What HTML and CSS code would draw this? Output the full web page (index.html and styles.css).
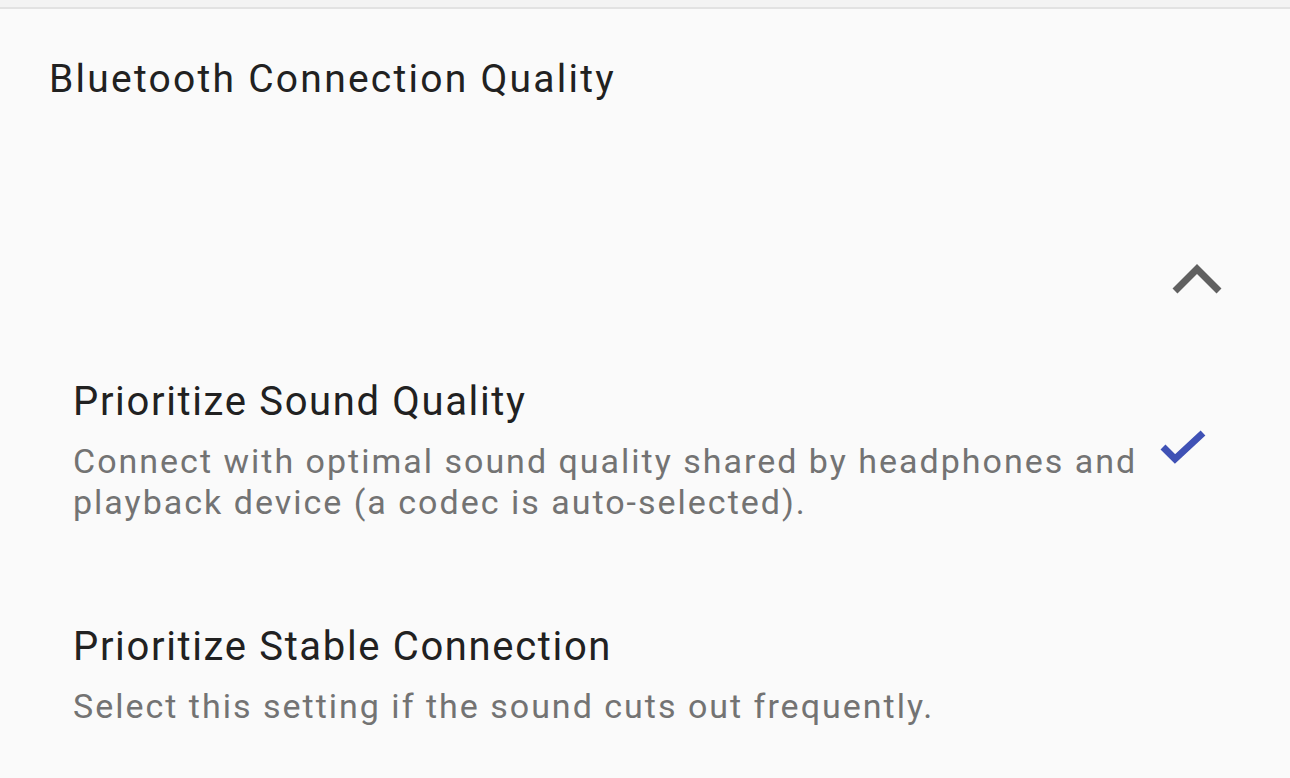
FILE: index.html
```html
<!DOCTYPE html>
<html lang="en">
<head>
  <meta charset="UTF-8">
  <title>Bluetooth Connection Quality</title>
  <link rel="stylesheet" href="styles.css">
</head>
<body>
  <div class="topbar"></div>
  <div class="panel">
    <h1 class="panel-title">Bluetooth Connection Quality</h1>
    <div class="collapse-row">
      <svg class="chevron" width="52" height="32" viewBox="0 0 52 32">
        <path d="M4 28 L26 6 L48 28" fill="none" stroke="#606060" stroke-width="7"/>
      </svg>
    </div>
    <div class="option-list">
      <div class="option selected">
        <div class="option-text">
          <div class="option-title">Prioritize Sound Quality</div>
          <div class="option-desc">Connect with optimal sound quality shared by headphones and playback device (a codec is auto-selected).</div>
        </div>
        <svg class="check" width="46" height="36" viewBox="0 0 46 36">
          <path d="M3 17 L15 29 L43 3" fill="none" stroke="#3f51b5" stroke-width="7"/>
        </svg>
      </div>
      <div class="option">
        <div class="option-text">
          <div class="option-title">Prioritize Stable Connection</div>
          <div class="option-desc">Select this setting if the sound cuts out frequently.</div>
        </div>
      </div>
    </div>
  </div>
</body>
</html>
```

FILE: styles.css
```css
body {
  margin: 0;
  background: #fafafa;
  font-family: Roboto, "Noto Sans", sans-serif;
  color: #212121;
  overflow: hidden;
}
.topbar {
  height: 7px;
  background: #f3f3f3;
  border-bottom: 2px solid #e2e2e2;
}
.panel {
  padding: 0 0 0 49px;
}
.panel-title {
  margin: 0;
  padding-top: 47px;
  font-size: 39px;
  font-weight: 400;
  line-height: 46px;
  letter-spacing: 2.25px;
}
.collapse-row {
  display: flex;
  justify-content: flex-end;
  padding: 161px 67px 0 0;
}
.option-list {
  display: flex;
  flex-direction: column;
  gap: 100px;
  margin-top: 83px;
  padding-left: 24px;
}
.option {
  display: flex;
  align-items: center;
}
.option-text {
  width: 1087px;
}
.option-title {
  font-size: 40px;
  line-height: 48px;
  letter-spacing: 1.65px;
}
.option-desc {
  margin-top: 15px;
  font-size: 34px;
  line-height: 41px;
  letter-spacing: 2px;
  color: #737373;
}
.check {
  margin-top: -6px;
}
```
